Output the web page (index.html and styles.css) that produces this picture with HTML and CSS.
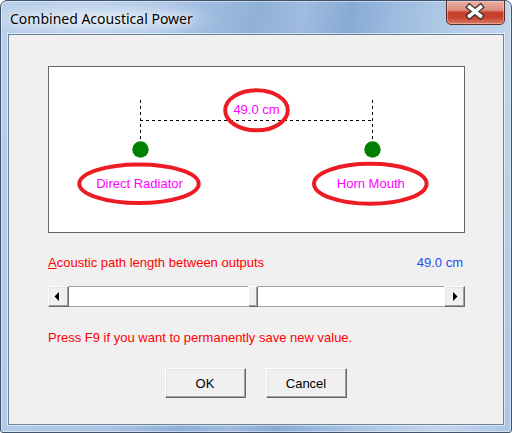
FILE: index.html
```html
<!DOCTYPE html>
<html>
<head>
<meta charset="utf-8">
<title>Combined Acoustical Power</title>
<link rel="stylesheet" href="styles.css">
</head>
<body>
<div class="window">
  <div class="titlebar">
    <span class="title">Combined Acoustical Power</span>
    <div class="close">
      <svg width="57" height="23" viewBox="0 0 57 23">
        <path d="M22.5 6 L33.5 15 M33.5 6 L22.5 15" stroke="#3b2a2a" stroke-width="6" stroke-linecap="square" fill="none"/>
        <path d="M22.5 6 L33.5 15 M33.5 6 L22.5 15" stroke="#ffffff" stroke-width="3.6" stroke-linecap="square" fill="none"/>
      </svg>
    </div>
  </div>
  <div class="client">
    <div class="diagram">
      <svg width="415" height="165" viewBox="0 0 415 165">
        <g stroke="#000" stroke-width="1" stroke-dasharray="3 3" fill="none">
          <path d="M91.5 33 V72"/>
          <path d="M91 53.5 H324"/>
          <path d="M323.5 33 V72"/>
        </g>
        <circle cx="91.5" cy="82.5" r="8.2" fill="#008000"/>
        <circle cx="323.5" cy="82.5" r="8.2" fill="#008000"/>
        <g stroke="#ed1c24" stroke-width="4" fill="none">
          <ellipse cx="207.5" cy="43.3" rx="31.3" ry="20"/>
          <ellipse cx="90" cy="116.7" rx="59.7" ry="19.3"/>
          <ellipse cx="321.3" cy="116.7" rx="56.3" ry="20"/>
        </g>
        <g class="diag-text">
          <text x="207.5" y="47">49.0 cm</text>
          <text x="90.5" y="121">Direct Radiator</text>
          <text x="321.8" y="121">Horn Mouth</text>
        </g>
      </svg>
    </div>
    <div class="value-row">
      <span class="label"><u>A</u>coustic path length between outputs</span>
      <span class="value">49.0 cm</span>
    </div>
    <div class="scrollbar">
      <div class="sb-btn sb-left">
        <svg width="5" height="9" viewBox="0 0 5 9"><polygon points="5,0 5,9 0.5,4.5" fill="#000"/></svg>
      </div>
      <div class="track">
        <div class="track-part" style="flex-grow:179"></div>
        <div class="thumb"></div>
        <div class="track-part" style="flex-grow:186"></div>
      </div>
      <div class="sb-btn sb-right">
        <svg width="5" height="9" viewBox="0 0 5 9"><polygon points="0,0 0,9 4.5,4.5" fill="#000"/></svg>
      </div>
    </div>
    <p class="hint">Press F9 if you want to permanently save new value.</p>
    <div class="buttons">
      <button class="btn">OK</button>
      <button class="btn">Cancel</button>
    </div>
  </div>
</div>
</body>
</html>
```
FILE: styles.css
```css
html, body {
  margin: 0;
  padding: 0;
}
body {
  width: 512px;
  height: 433px;
  overflow: hidden;
  background: #ffffff;
  font-family: "Liberation Sans", Arial, sans-serif;
}
.window {
  box-sizing: border-box;
  width: 512px;
  height: 433px;
  border: 1px solid #41536a;
  border-radius: 7px 7px 3px 3px;
  display: flex;
  flex-direction: column;
  overflow: hidden;
  background:
    radial-gradient(ellipse 120px 20px at 100px 18px, rgba(232,241,250,0.8), rgba(232,241,250,0) 100%),
    linear-gradient(100deg, #b9cfea 0%, #abc5e5 30%, #8fb0d7 44%, #a0bcdf 52%, #87aad5 60%, #9dbbdf 68%, #b3cbe7 78%, #c2d5ec 88%, #abc6e7 100%);
  box-shadow: inset 0 0 0 1px rgba(255,255,255,0.45);
}
.titlebar {
  flex: none;
  height: 33px;
  display: flex;
  justify-content: space-between;
  align-items: flex-start;
}
.title {
  margin-left: 9px;
  padding-top: 8px;
  font-family: "Noto Sans", "Open Sans", sans-serif;
  font-size: 14px;
  line-height: 20px;
  color: #000;
  text-shadow: 0 0 8px rgba(255,255,255,0.9), 0 0 3px rgba(255,255,255,0.8);
}
.close {
  box-sizing: border-box;
  width: 59px;
  height: 25px;
  margin-top: -1px;
  margin-right: 6px;
  border: 1px solid #5a2d28;
  border-radius: 0 0 5px 5px;
  background: linear-gradient(180deg, #eab1a3 0%, #dc8d7b 40%, #c63e2a 50%, #c5432e 72%, #dc7a62 100%);
  box-shadow: inset 0 0 0 1px rgba(255,220,210,0.45);
}
.close svg {
  display: block;
}
.client {
  flex: 1;
  margin: 0 7px 7px 7px;
  border: 1px solid #6f8398;
  box-shadow: 0 0 0 1px rgba(255,255,255,0.55);
  background: #f0f0f0;
  padding: 31px 38px 0 39px;
  display: flex;
  flex-direction: column;
}
.diagram {
  box-sizing: border-box;
  width: 417px;
  height: 167px;
  border: 1px solid #666666;
  background: #ffffff;
}
.diagram svg {
  display: block;
}
.diag-text text {
  font-family: "Liberation Sans", Arial, sans-serif;
  font-size: 13px;
  fill: #ff00ff;
  text-anchor: middle;
}
.value-row {
  margin-top: 22px;
  width: 417px;
  padding-right: 2px;
  box-sizing: border-box;
  display: flex;
  justify-content: space-between;
  font-size: 13px;
  line-height: 15px;
}
.label {
  color: #ff0000;
}
.value {
  color: #1f4ff5;
}
.scrollbar {
  margin-top: 16px;
  width: 417px;
  height: 21px;
  display: flex;
}
.sb-btn {
  box-sizing: border-box;
  width: 21px;
  height: 21px;
  flex: none;
  background: #f0f0f0;
  border: 1px solid;
  border-color: #ffffff #696969 #696969 #ffffff;
  box-shadow: inset -1px -1px 0 #a0a0a0, inset 1px 1px 0 #e3e3e3;
  display: flex;
  align-items: center;
}
.sb-left {
  padding-left: 5px;
}
.sb-right {
  padding-left: 8px;
}
.sb-btn svg {
  display: block;
}
.track {
  flex: 1;
  display: flex;
}
.track-part {
  flex-basis: 0;
  background: #ffffff;
  border-top: 1px solid #a0a0a0;
  border-bottom: 1px solid #a0a0a0;
}
.thumb {
  box-sizing: border-box;
  width: 10px;
  flex: none;
  background: #f0f0f0;
  border: 1px solid;
  border-color: #ffffff #696969 #696969 #ffffff;
  box-shadow: inset -1px -1px 0 #a0a0a0;
}
.hint {
  margin: 23px 0 0 0;
  font-size: 13px;
  line-height: 15px;
  color: #ff0000;
}
.buttons {
  margin-top: 23px;
  padding-right: 2px;
  display: flex;
  justify-content: center;
  gap: 20px;
}
.btn {
  box-sizing: border-box;
  width: 81px;
  height: 30px;
  padding: 0;
  background: #f0f0f0;
  border: 1px solid;
  border-color: #ffffff #696969 #696969 #ffffff;
  box-shadow: inset -1px -1px 0 #a0a0a0, inset 1px 1px 0 #e3e3e3;
  font-family: "Liberation Sans", Arial, sans-serif;
  font-size: 13px;
  color: #000;
}
```
